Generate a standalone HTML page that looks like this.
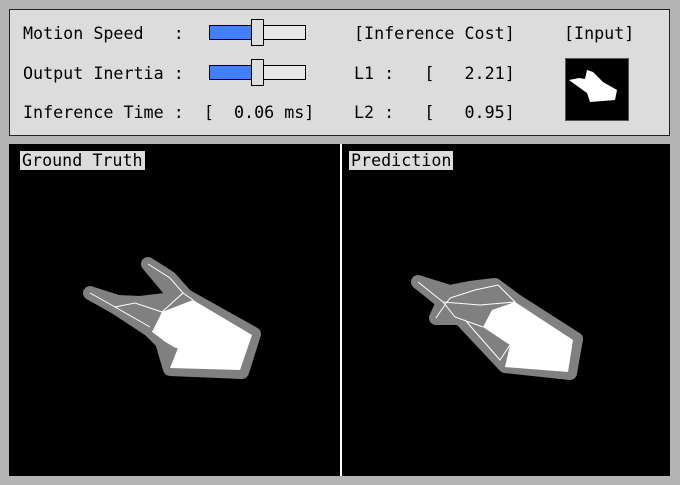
<!DOCTYPE html>
<html><head><style>
body{margin:0;width:680px;height:485px;background:#b4b4b4;position:relative;overflow:hidden;font-family:"DejaVu Sans Mono","Liberation Mono",monospace;font-size:16.7px;color:#000}
.t{position:absolute;white-space:pre;line-height:20px}
#top{position:absolute;left:9px;top:9px;width:659px;height:125px;background:#dcdcdc;border:1px solid #222}
#bot{position:absolute;left:9px;top:144px;width:661px;height:332px;background:#000}
.track{position:absolute;left:209px;width:95px;height:13px;background:#e8e8e8;border:1px solid #000}
.fill{position:absolute;left:209px;width:43px;height:13px;background:#4080ff;border:1px solid #000;border-right:none}
.thumb{position:absolute;left:251px;width:11px;height:25px;background:#dedede;border:1px solid #000}
.lab{position:absolute;background:#dcdcdc;line-height:19px;white-space:pre;padding:0 2px}
</style></head><body>
<div id="top"></div>
<div class="t" style="left:23px;top:23px">Motion Speed   :</div>
<div class="t" style="left:23px;top:63px">Output Inertia :</div>
<div class="t" style="left:23px;top:102px">Inference Time :  [  0.06 ms]</div>
<div class="track" style="top:25px"></div><div class="fill" style="top:25px"></div><div class="thumb" style="top:19px"></div>
<div class="track" style="top:65px"></div><div class="fill" style="top:65px"></div><div class="thumb" style="top:59px"></div>
<div class="t" style="left:354px;top:23px">[Inference Cost]</div>
<div class="t" style="left:354px;top:63px">L1 :   [   2.21]</div>
<div class="t" style="left:354px;top:102px">L2 :   [   0.95]</div>
<div class="t" style="left:564px;top:23px">[Input]</div>
<svg style="position:absolute;left:565px;top:58px" width="64" height="63"><rect x="0.5" y="0.5" width="63" height="62" fill="#000" stroke="#555"/>
<polygon points="4,22 14,20 20,21 22,12 28,14 38,24 52,32 50,42 25,44 22,35 8,25" fill="#fff"/></svg>
<div id="bot"></div>
<div style="position:absolute;left:340px;top:144px;width:2px;height:332px;background:#fff"></div>
<div class="lab" style="left:20px;top:151px">Ground Truth</div>
<div class="lab" style="left:349px;top:151px">Prediction</div>
<svg style="position:absolute;left:0;top:0" width="680" height="485">
<g stroke="#808080" stroke-width="14" stroke-linejoin="round" stroke-linecap="round" fill="#808080">
<polygon points="148,264 170,278 186,296 254,334 242,372 170,369 162,342 150,330 115,307 90,293 118,302 140,303 165,300 178,300"/>
<polygon points="418,282 443,302 436,318 460,318 505,366 570,373 576,339 515,300 495,285 470,288 450,292"/>
</g>
<g fill="#fff">
<polygon points="193,300 252,335 240,370 170,368 178,348 163,340 152,332 162,312"/>
<polygon points="515,302 573,340 568,372 505,367 510,345 483,327 492,310"/>
</g>
<g stroke="#fff" stroke-width="1" fill="none">
<polyline points="148,264 170,278 183,293 193,300"/>
<polyline points="90,293 115,307 150,327"/>
<polyline points="115,307 135,303 162,312 183,293"/>
<polyline points="163,340 175,347 178,348"/>
<polyline points="418,282 443,302 455,317 483,327"/>
<polyline points="443,302 480,305 515,302 498,285 475,290 450,298 440,312 436,318"/>
<polyline points="465,320 500,360 510,345"/>
</g>
</svg>
</body></html>
